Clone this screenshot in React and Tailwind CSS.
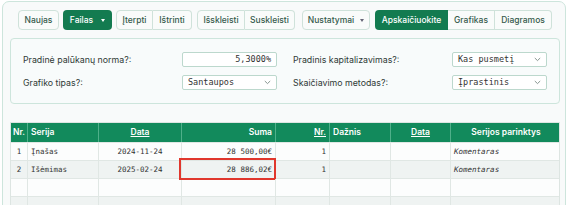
import React from 'react';

const btn = 'h-[20px] flex items-center justify-center border border-[#cfe2da] bg-[#f9fbfa] text-[#355a4c] font-medium';
const green = 'h-[20px] flex items-center justify-center bg-[#137b50] text-white font-medium';

function Chevron() {
  return (
    <svg width="7" height="5" viewBox="0 0 7 5" className="text-[#7a8a85]">
      <path d="M0.8 1l2.7 2.6L6.2 1" fill="none" stroke="currentColor" strokeWidth="0.9" />
    </svg>
  );
}

function Caret({ light }) {
  return (
    <span className={`w-0 h-0 border-l-[2.5px] border-r-[2.5px] border-t-[3px] border-l-transparent border-r-transparent ${light ? 'border-t-white' : 'border-t-[#667]'}`} />
  );
}

function Field({ value, select, right }) {
  return (
    <div className={`h-[15px] w-[95px] flex items-center border border-[#bcd8cd] bg-white rounded-[2px] px-[5px] text-[8.5px] text-[#333] ${right ? 'justify-end' : 'justify-between'}`}
      style={{ fontFamily: '"DejaVu Sans Mono", monospace' }}>
      <span>{value}</span>
      {select && <Chevron />}
    </div>
  );
}

const rows = [
  { nr: '1', serija: 'Įnašas', data: '2024-11-24', suma: '28 500,00€', nr2: '1', kom: 'Komentaras' },
  { nr: '2', serija: 'Išėmimas', data: '2025-02-24', suma: '28 886,02€', nr2: '1', kom: 'Komentaras', mark: true },
  {}, {},
];

export default function App() {
  const cols = 'grid grid-cols-[17px_71px_83px_94px_54px_61px_60px_110px]';
  return (
    <div className="w-[570px] h-[205px] overflow-hidden bg-white" style={{ fontFamily: 'Inter, "Noto Sans", sans-serif' }}>
      <div className="ml-[2px] mt-[1px] w-[564px] border border-[#cde5dc] rounded-[7px] bg-[#f8fafa] px-[7px] pt-[8px] pb-[20px]">
        {/* toolbar */}
        <div className="flex items-center pl-[8px] text-[8.5px]">
          <div className={`${btn} w-[41px] rounded-[4px]`}>Naujas</div>
          <div className={`${green} w-[49px] rounded-[4px] ml-[4px] gap-[8px]`}>Failas <Caret light /></div>
          <div className="flex ml-[4px]">
            <div className={`${btn} w-[37px] rounded-l-[4px]`}>Įterpti</div>
            <div className={`${btn} w-[39px] rounded-r-[4px] border-l-0`}>Ištrinti</div>
          </div>
          <div className="flex ml-[5px]">
            <div className={`${btn} w-[48px] rounded-l-[4px]`}>Išskleisti</div>
            <div className={`${btn} w-[50px] rounded-r-[4px] border-l-0`}>Suskleisti</div>
          </div>
          <div className={`${btn} w-[68px] rounded-[4px] ml-[7px] gap-[6px]`}>Nustatymai <Caret /></div>
          <div className="flex ml-[5px]">
            <div className={`${green} w-[73px] rounded-l-[4px]`}>Apskaičiuokite</div>
            <div className={`${btn} w-[47px] border-l-0`}>Grafikas</div>
            <div className={`${btn} w-[57px] rounded-r-[4px] border-l-0`}>Diagramos</div>
          </div>
        </div>

        {/* settings */}
        <div className="mt-[8px] w-[550px] border border-[#cde5dc] rounded-[4px] bg-[#f8fbfb] px-[12px] py-[13px] grid grid-cols-2 gap-x-[16px] gap-y-[8px] text-[8.8px] text-[#2f3a36]">
          <div className="flex items-center justify-between">
            <span>Pradinė palūkanų norma?:</span>
            <Field value="5,3000%" right />
          </div>
          <div className="flex items-center justify-between">
            <span>Pradinis kapitalizavimas?:</span>
            <Field value="Kas pusmetį" select />
          </div>
          <div className="flex items-center justify-between">
            <span>Grafiko tipas?:</span>
            <Field value="Santaupos" select />
          </div>
          <div className="flex items-center justify-between">
            <span>Skaičiavimo metodas?:</span>
            <Field value="Įprastinis" select />
          </div>
        </div>

        {/* table */}
        <div className="mt-[18px] w-[550px] border border-[#dde5e2]">
          <div className={`${cols} h-[19px] bg-[#128a5c] text-white font-semibold text-[8.5px]`}>
            <div className="flex items-center justify-center border-r border-[#4fb08a]">Nr.</div>
            <div className="flex items-center px-[3px] border-r border-[#4fb08a]">Serija</div>
            <div className="flex items-center justify-center underline border-r border-[#4fb08a]">Data</div>
            <div className="flex items-center justify-end px-[3px] border-r border-[#4fb08a]">Suma</div>
            <div className="flex items-center justify-end px-[3px] underline border-r border-[#4fb08a]">Nr.</div>
            <div className="flex items-center px-[3px] border-r border-[#4fb08a]">Dažnis</div>
            <div className="flex items-center justify-center underline border-r border-[#4fb08a]">Data</div>
            <div className="flex items-center justify-center">Serijos parinktys</div>
          </div>
          {rows.map((r, i) => (
            <div key={i} className={`${cols} h-[18px] text-[7.5px] text-[#333] border-t border-[#e0e7e4] ${i % 2 ? 'bg-[#eff3f2]' : 'bg-[#fcfdfd]'}`}
              style={{ fontFamily: '"DejaVu Sans Mono", monospace' }}>
              <div className="flex items-center justify-center border-r border-[#e0e7e4]">{r.nr}</div>
              <div className="flex items-center px-[3px] border-r border-[#e0e7e4]">{r.serija}</div>
              <div className="flex items-center justify-center border-r border-[#e0e7e4]">{r.data}</div>
              <div className="relative flex items-center justify-end px-[3px] border-r border-[#e0e7e4]">
                {r.suma}
                {r.mark && <div className="absolute -left-[3px] -right-[1px] -top-[3px] -bottom-[2px] border-2 border-[#e0372d]" />}
              </div>
              <div className="flex items-center justify-end px-[3px] border-r border-[#e0e7e4]">{r.nr2}</div>
              <div className="border-r border-[#e0e7e4]" />
              <div className="border-r border-[#e0e7e4]" />
              <div className="flex items-center px-[3px] italic">{r.kom}</div>
            </div>
          ))}
        </div>
      </div>
    </div>
  );
}
